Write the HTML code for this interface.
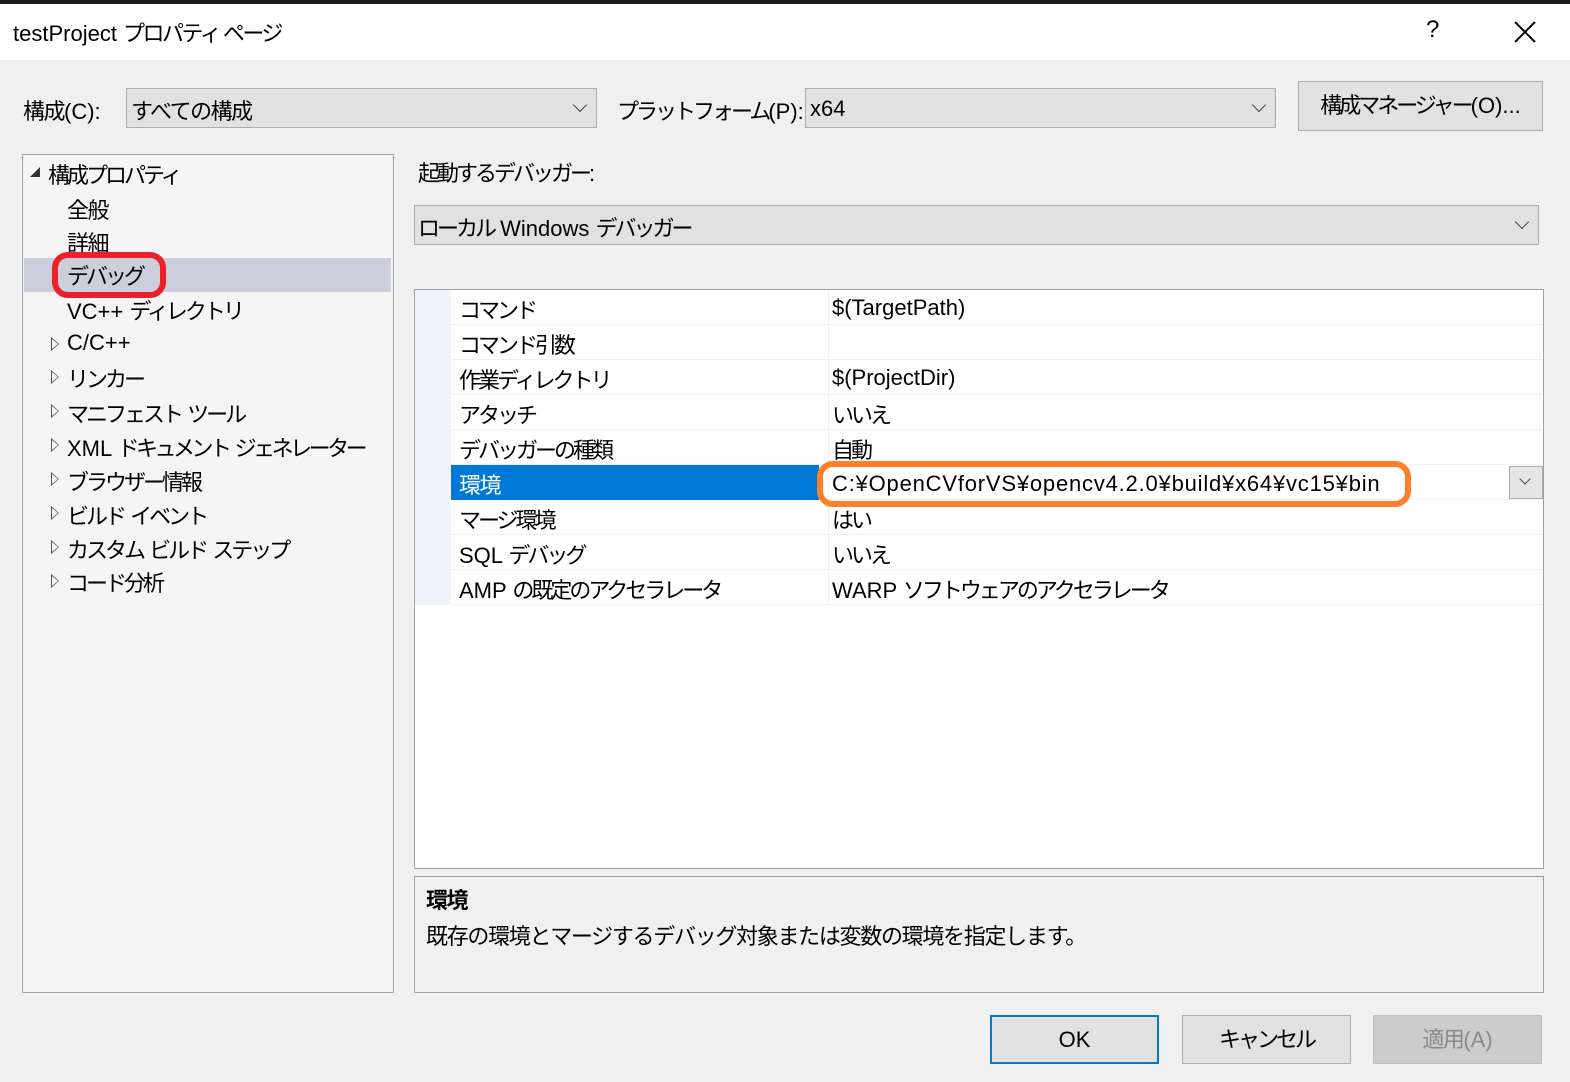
<!DOCTYPE html>
<html><head><meta charset="utf-8"><style>
*{box-sizing:border-box;margin:0;padding:0}
body{width:1570px;height:1082px;background:#f0f0f0;font-family:"Liberation Sans","Noto Sans CJK JP",sans-serif;font-size:22px;color:#000;position:relative;overflow:hidden;letter-spacing:-1.5px}
.a{position:absolute;white-space:nowrap}
.k{letter-spacing:-3px}
.l{letter-spacing:0}
.sel{background:#e1e1e1;border:1px solid #adadad}
.chev{position:absolute;width:10px;height:10px;border-right:1.5px solid #444;border-bottom:1.5px solid #444;transform:rotate(45deg)}
.row{position:absolute;left:451px;width:1092px;height:35px;border-bottom:1px solid #f0f0f0}
.row>span{position:absolute;top:3px;white-space:nowrap}
.tri{position:absolute;width:0;height:0;border-top:7px solid transparent;border-bottom:7px solid transparent;border-left:8px solid #555}
.tri:after{content:"";position:absolute;left:-7px;top:-5px;border-top:5px solid transparent;border-bottom:5px solid transparent;border-left:6px solid #f5f5f5}
.btn{position:absolute;top:1015px;height:49px;width:169px;background:#e1e1e1;border:1px solid #adadad;text-align:center;line-height:47px}
</style></head><body>
<div class="a" style="left:0;top:0;width:1570px;height:4px;background:#1e1e1e"></div>
<div class="a" style="left:0;top:4px;width:1570px;height:56px;background:#fff"></div>
<div class="a" style="left:13px;top:16px"><span class="l">testProject </span><span style="letter-spacing:-2.5px">プロパティ ページ</span></div>
<div class="a" style="left:1426px;top:16px;font-size:24px">?</div>
<svg class="a" style="left:1514px;top:21px" width="22" height="22"><path d="M1 1L21 21M21 1L1 21" stroke="#000" stroke-width="2"/></svg>

<div class="a" style="left:23px;top:94px">構成<span class="l">(C):</span></div>
<div class="a sel" style="left:126px;top:88px;width:471px;height:40px"></div>
<div class="a" style="left:131px;top:94px">すべての構成</div>
<div class="chev" style="left:575px;top:100px"></div>
<div class="a k" style="left:617px;top:94px">プラットフォーム<span class="l">(P):</span></div>
<div class="a sel" style="left:805px;top:88px;width:471px;height:40px"></div>
<div class="a l" style="left:810px;top:96px">x64</div>
<div class="chev" style="left:1254px;top:100px"></div>
<div class="a sel k" style="left:1298px;top:81px;width:245px;height:50px;text-align:center;line-height:48px">構成マネージャー<span class="l">(O)...</span></div>

<div class="a" style="left:22px;top:154px;width:372px;height:839px;background:#f5f5f5;border:1px solid #a0a0a0"></div>
<div class="a" style="left:24px;top:258px;width:367px;height:34px;background:#cccedb"></div>
<div class="a" style="left:30px;top:167px;width:0;height:0;border-left:10px solid transparent;border-bottom:10px solid #333"></div>
<div class="a k" style="left:48px;top:158px">構成プロパティ</div>
<div class="a" style="left:67px;top:193px">全般</div>
<div class="a" style="left:67px;top:226px">詳細</div>
<div class="a k" style="left:67px;top:259px">デバッグ</div>
<div class="a" style="left:52px;top:252px;width:114px;height:46px;border:6px solid #e8212a;border-radius:16px"></div>
<div class="a k" style="left:67px;top:294px"><span class="l">VC++ </span>ディレクトリ</div>
<div class="tri" style="left:51px;top:337px"></div><div class="a l" style="left:67px;top:330px">C/C++</div>
<div class="tri" style="left:51px;top:370px"></div><div class="a k" style="left:67px;top:362px">リンカー</div>
<div class="tri" style="left:51px;top:404px"></div><div class="a k" style="left:67px;top:397px">マニフェスト<span class="l"> </span>ツール</div>
<div class="tri" style="left:51px;top:438px"></div><div class="a k" style="left:67px;top:431px;letter-spacing:-3.5px"><span class="l">XML </span>ドキュメント<span class="l"> </span>ジェネレーター</div>
<div class="tri" style="left:51px;top:472px"></div><div class="a k" style="left:67px;top:465px">ブラウザー情報</div>
<div class="tri" style="left:51px;top:506px"></div><div class="a k" style="left:67px;top:499px">ビルド<span class="l"> </span>イベント</div>
<div class="tri" style="left:51px;top:540px"></div><div class="a k" style="left:67px;top:533px">カスタム<span class="l"> </span>ビルド<span class="l"> </span>ステップ</div>
<div class="tri" style="left:51px;top:574px"></div><div class="a k" style="left:67px;top:566px">コード分析</div>

<div class="a k" style="left:418px;top:156px">起動するデバッガー:</div>
<div class="a sel" style="left:414px;top:205px;width:1125px;height:40px"></div>
<div class="a k" style="left:418px;top:211px">ローカル<span class="l"> Windows </span>デバッガー</div>
<div class="chev" style="left:1517px;top:217px"></div>

<div class="a" style="left:414px;top:289px;width:1130px;height:580px;background:#fff;border:1px solid #a0a0a0"></div>
<div class="a" style="left:415px;top:290px;width:36px;height:315px;background:#f0f4fa"></div>
<div class="a" style="left:828px;top:290px;width:1px;height:315px;background:#f0f0f0"></div>
<div class="row k" style="top:290px"><span style="left:8px">コマンド</span><span class="l" style="left:381px;top:5px">$(TargetPath)</span></div>
<div class="row k" style="top:325px"><span style="left:8px">コマンド引数</span></div>
<div class="row k" style="top:360px"><span style="left:8px">作業ディレクトリ</span><span class="l" style="left:381px;top:5px">$(ProjectDir)</span></div>
<div class="row k" style="top:395px"><span style="left:8px">アタッチ</span><span style="left:381px">いいえ</span></div>
<div class="row k" style="top:430px"><span style="left:8px">デバッガーの種類</span><span style="left:381px">自動</span></div>
<div class="row" style="top:465px"><div class="a" style="left:0;top:0;width:368px;height:35px;background:#0078d7"></div><span style="left:8px;color:#fff">環境</span><span class="l" style="left:381px;top:6px;letter-spacing:0.8px">C:¥OpenCVforVS¥opencv4.2.0¥build¥x64¥vc15¥bin</span></div>
<div class="a" style="left:1509px;top:466px;width:34px;height:33px;background:#e5e5e5;border:1px solid #adadad"></div>
<div class="chev" style="left:1521px;top:475px;width:8px;height:8px"></div>
<div class="a" style="left:817px;top:461px;width:594px;height:46px;border:6px solid #ff7f27;border-radius:16px"></div>
<div class="row k" style="top:500px"><span style="left:8px">マージ環境</span><span style="left:381px">はい</span></div>
<div class="row k" style="top:535px"><span style="left:8px"><span class="l">SQL </span>デバッグ</span><span style="left:381px">いいえ</span></div>
<div class="row k" style="top:570px"><span style="left:8px"><span class="l">AMP </span>の既定のアクセラレータ</span><span style="left:381px"><span class="l">WARP </span>ソフトウェアのアクセラレータ</span></div>

<div class="a" style="left:414px;top:876px;width:1130px;height:117px;border:1px solid #a0a0a0;background:#f0f0f0"></div>
<div class="a" style="left:426px;top:883px;font-weight:bold">環境</div>
<div class="a" style="left:426px;top:919px;letter-spacing:-1.3px">既存の環境とマージするデバッグ対象または変数の環境を指定します。</div>

<div class="btn l" style="left:990px;border:2px solid #0078d7;line-height:45px">OK</div>
<div class="btn k" style="left:1182px">キャンセル</div>
<div class="btn" style="left:1373px;background:#cccccc;border-color:#bfbfbf;color:#8a8a8a">適用<span class="l">(A)</span></div>
</body></html>
